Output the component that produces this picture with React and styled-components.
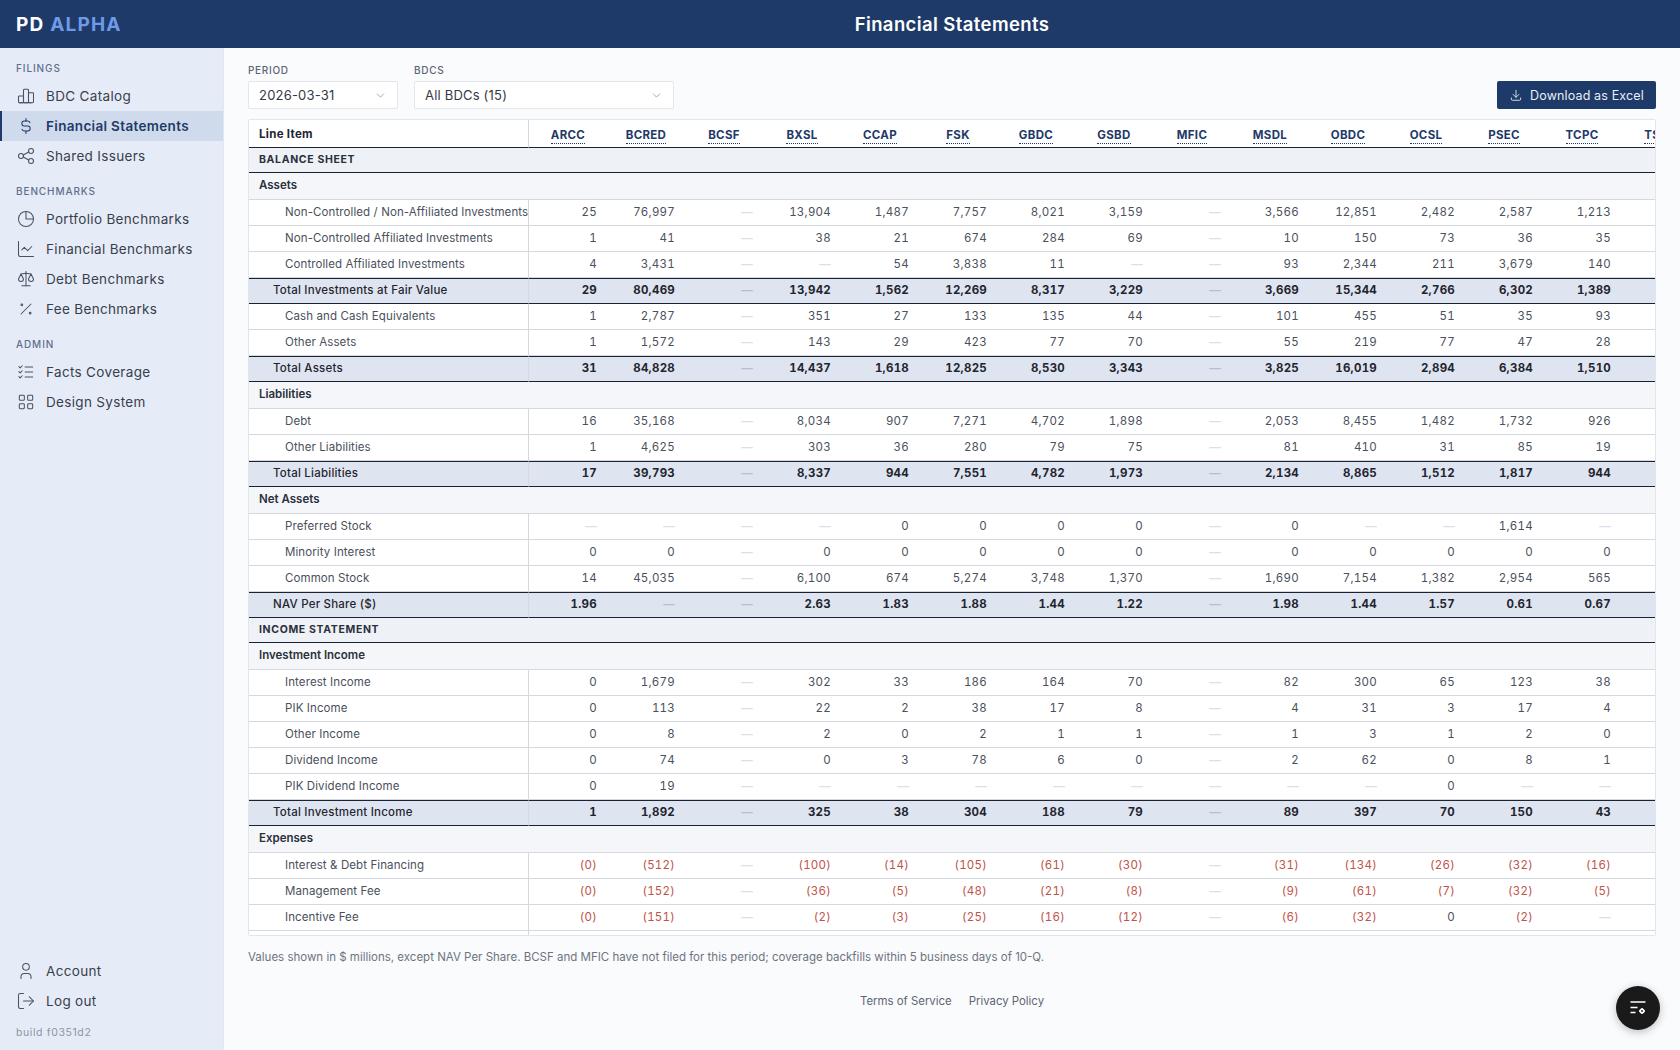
import styled, { createGlobalStyle } from 'styled-components'
import {
  TbChartBar, TbCurrencyDollar, TbShare, TbChartPie2, TbScale, TbPercentage,
  TbListCheck, TbLayoutGrid, TbUser, TbDownload, TbChevronDown,
} from 'react-icons/tb'
import { ChartLine, LogOut } from 'lucide-react'

const FONT = `'Inter', 'Open Sans', sans-serif`

const GlobalStyle = createGlobalStyle`
  html, body { margin: 0; height: 100%; }
  body { font-family: ${FONT}; background: #fafbfd; color: #343a46; }
  #root { height: 100%; }
  * { box-sizing: border-box; }
`

const Shell = styled.div`
  height: 100vh;
  display: flex;
  flex-direction: column;
  overflow: hidden;
`

const TopBar = styled.header`
  height: 48px;
  flex: none;
  display: flex;
  align-items: center;
  background: #1e3a68;
  color: #fff;
`

const Brand = styled.div`
  width: 224px;
  padding-left: 16px;
  font-size: 19px;
  font-weight: 700;
  letter-spacing: 1.2px;
  span { color: #6f9ae8; }
`

const PageTitle = styled.h1`
  flex: 1;
  margin: 0 0 1px;
  text-align: center;
  font-size: 18.5px;
  font-weight: 600;
  letter-spacing: 0.4px;
`

const Body = styled.div`
  flex: 1;
  min-height: 0;
  display: flex;
`

const Sidebar = styled.aside`
  width: 224px;
  flex: none;
  display: flex;
  flex-direction: column;
  background: #e6ecf7;
  border-right: 1px solid #e2e6ee;
  padding: 14px 0 11px;
`

const NavLabel = styled.div`
  padding-left: 16px;
  margin: 0 0 7px;
  font-size: 10px;
  font-weight: 500;
  letter-spacing: 0.9px;
  color: #5f6f8c;
`

const NavGroup = styled.nav`
  display: flex;
  flex-direction: column;
  margin-bottom: 14px;
`

const NavItem = styled.a`
  height: 30px;
  display: flex;
  align-items: center;
  gap: 10px;
  padding-left: 16px;
  font-size: 13.5px;
  font-weight: ${p => (p.$active ? 600 : 400)};
  letter-spacing: 0.33px;
  color: ${p => (p.$active ? '#1e3a68' : '#383f4c')};
  background: ${p => (p.$active ? '#cfdaec' : 'transparent')};
  box-shadow: ${p => (p.$active ? 'inset 2px 0 0 #1e3a68' : 'none')};
  svg { width: 20px; height: 20px; stroke-width: 1.25; color: ${p => (p.$active ? '#1e3a68' : '#4a5160')}; flex: none; }
`

const SidebarFoot = styled.div`
  margin-top: auto;
  display: flex;
  flex-direction: column;
`

const BuildTag = styled.div`
  padding: 10px 0 0 16px;
  font-size: 10.5px;
  letter-spacing: 0.6px;
  color: #8d95a3;
`

const Main = styled.main`
  flex: 1;
  min-width: 0;
  display: flex;
  flex-direction: column;
  padding: 16px 24px 0;
`

const Toolbar = styled.div`
  display: flex;
  align-items: flex-end;
  gap: 16px;
  margin-bottom: 10px;
`

const Field = styled.label`
  display: flex;
  flex-direction: column;
  gap: 5px;
`

const FieldLabel = styled.span`
  font-size: 10px;
  font-weight: 500;
  letter-spacing: 0.7px;
  color: #5d6574;
`

const Select = styled.div`
  width: ${p => p.$width}px;
  height: 28px;
  display: flex;
  align-items: center;
  justify-content: space-between;
  padding: 0 10px;
  background: #fff;
  border: 1px solid #e3e6ec;
  border-radius: 2px;
  font-size: 13px;
  letter-spacing: 0.2px;
  color: #343a46;
  svg { width: 13px; height: 13px; color: #8f96a3; stroke-width: 1.5; }
`

const DownloadButton = styled.button`
  margin-left: auto;
  height: 28px;
  width: 159px;
  display: flex;
  align-items: center;
  justify-content: center;
  gap: 7px;
  padding-bottom: 1px;
  border: 0;
  border-radius: 2px;
  background: #1e3a68;
  color: #e9eef7;
  font-family: ${FONT};
  font-size: 12.5px;
  letter-spacing: 0.14px;
  svg { width: 14px; height: 14px; stroke-width: 1.5; }
`

const TableWrap = styled.div`
  flex: none;
  height: 817px;
  overflow: auto;
  scrollbar-width: none;
  background: #fff;
  border: 1px solid #e2e5ec;
  border-radius: 2px;
`

const Table = styled.table`
  width: 1450px;
  table-layout: fixed;
  border-collapse: separate;
  border-spacing: 0;
  font-size: 11.5px;
`

const HeadCell = styled.th`
  height: 28px;
  padding: 3px 0 0;
  background: #fff;
  border-bottom: 1px solid #1a2233;
  position: sticky;
  top: 0;
  z-index: 1;
  text-align: center;
  font-size: 11.5px;
  font-weight: 700;
  letter-spacing: 0.3px;
  color: #1e3a68;
  span { border-bottom: 1px dotted #1e3a68; padding-bottom: 1px; }
`

const LineHead = styled(HeadCell)`
  padding: 0 0 0 10px;
  text-align: left;
  color: #1f2530;
  border-right: 1px solid #d5d8de;
`

const BandCell = styled.td`
  height: ${p => (p.$major ? 25 : 27)}px;
  padding: 0 0 2px 10px;
  background: ${p => (p.$major ? '#eef1f6' : '#f4f6f9')};
  border-bottom: 1px solid ${p => (p.$major ? '#1a2233' : '#d5d8de')};
  font-size: ${p => (p.$major ? '10.5px' : '11.5px')};
  font-weight: ${p => (p.$major ? 700 : 600)};
  letter-spacing: ${p => (p.$major ? '0.65px' : '0')};
  color: #2a303c;
`

const LineCell = styled.td`
  height: 26px;
  padding: 0 0 2px ${p => (p.$total ? 24 : 36)}px;
  white-space: nowrap;
  overflow: hidden;
  font-weight: ${p => (p.$total ? 500 : 400)};
  letter-spacing: ${p => (p.$total ? 0.22 : 0.1)}px;
  color: ${p => (p.$total ? '#1f2530' : '#4a505c')};
  background: ${p => (p.$total ? '#dfe5f0' : '#fff')};
  border-right: 1px solid #d5d8de;
  border-bottom: 1px solid ${p => (p.$total ? '#1a2233' : '#d5d8de')};
  border-top: ${p => (p.$total ? '1px solid #1a2233' : '0')};
`

const toneColor = p => {
  if (p.$tone === 'neg') return '#c0534a'
  if (p.$tone === 'nil') return p.$total ? '#b7bfcd' : '#dcdfe5'
  return p.$total ? '#1f2530' : '#4a505c'
}

const ValueCell = styled.td`
  height: 26px;
  padding: 0 10px 2px 0;
  text-align: right;
  white-space: nowrap;
  font-variant-numeric: tabular-nums;
  letter-spacing: 0.25px;
  font-weight: ${p => (p.$total || p.$tone === 'nil' ? 700 : 400)};
  color: ${toneColor};
  background: ${p => (p.$total ? '#dfe5f0' : '#fff')};
  border-bottom: 1px solid ${p => (p.$total ? '#1a2233' : '#d5d8de')};
  border-top: ${p => (p.$total ? '1px solid #1a2233' : '0')};
`

const Note = styled.p`
  margin: 14px 0 0;
  font-size: 11.5px;
  color: #6d7480;
`

const FootLinks = styled.div`
  margin-top: 30px;
  display: flex;
  justify-content: center;
  gap: 17px;
  font-size: 11.4px;
  color: #5d6574;
`

const Fab = styled.button`
  position: fixed;
  right: 20px;
  bottom: 20px;
  width: 44px;
  height: 44px;
  display: flex;
  align-items: center;
  justify-content: center;
  border: 0;
  border-radius: 50%;
  background: #1a1a1a;
  box-shadow: 0 2px 8px rgba(0, 0, 0, 0.25);
  color: #fff;
`

const COLUMNS = ['ARCC', 'BCRED', 'BCSF', 'BXSL', 'CCAP', 'FSK', 'GBDC', 'GSBD', 'MFIC', 'MSDL', 'OBDC', 'OCSL', 'PSEC', 'TCPC', 'TSLX']

const row = (label, values, total) => ({ label, values: values.split(' '), total })

const ROWS = [
  { band: 'BALANCE SHEET', major: true },
  { band: 'Assets' },
  row('Non-Controlled / Non-Affiliated Investments', '25 76,997 — 13,904 1,487 7,757 8,021 3,159 — 3,566 12,851 2,482 2,587 1,213 —'),
  row('Non-Controlled Affiliated Investments', '1 41 — 38 21 674 284 69 — 10 150 73 36 35 —'),
  row('Controlled Affiliated Investments', '4 3,431 — — 54 3,838 11 — — 93 2,344 211 3,679 140 —'),
  row('Total Investments at Fair Value', '29 80,469 — 13,942 1,562 12,269 8,317 3,229 — 3,669 15,344 2,766 6,302 1,389 —', true),
  row('Cash and Cash Equivalents', '1 2,787 — 351 27 133 135 44 — 101 455 51 35 93 —'),
  row('Other Assets', '1 1,572 — 143 29 423 77 70 — 55 219 77 47 28 —'),
  row('Total Assets', '31 84,828 — 14,437 1,618 12,825 8,530 3,343 — 3,825 16,019 2,894 6,384 1,510 —', true),
  { band: 'Liabilities' },
  row('Debt', '16 35,168 — 8,034 907 7,271 4,702 1,898 — 2,053 8,455 1,482 1,732 926 —'),
  row('Other Liabilities', '1 4,625 — 303 36 280 79 75 — 81 410 31 85 19 —'),
  row('Total Liabilities', '17 39,793 — 8,337 944 7,551 4,782 1,973 — 2,134 8,865 1,512 1,817 944 —', true),
  { band: 'Net Assets' },
  row('Preferred Stock', '— — — — 0 0 0 0 — 0 — — 1,614 — —'),
  row('Minority Interest', '0 0 — 0 0 0 0 0 — 0 0 0 0 0 —'),
  row('Common Stock', '14 45,035 — 6,100 674 5,274 3,748 1,370 — 1,690 7,154 1,382 2,954 565 —'),
  row('NAV Per Share ($)', '1.96 — — 2.63 1.83 1.88 1.44 1.22 — 1.98 1.44 1.57 0.61 0.67 —', true),
  { band: 'INCOME STATEMENT', major: true },
  { band: 'Investment Income' },
  row('Interest Income', '0 1,679 — 302 33 186 164 70 — 82 300 65 123 38 —'),
  row('PIK Income', '0 113 — 22 2 38 17 8 — 4 31 3 17 4 —'),
  row('Other Income', '0 8 — 2 0 2 1 1 — 1 3 1 2 0 —'),
  row('Dividend Income', '0 74 — 0 3 78 6 0 — 2 62 0 8 1 —'),
  row('PIK Dividend Income', '0 19 — — — — — — — — — 0 — — —'),
  row('Total Investment Income', '1 1,892 — 325 38 304 188 79 — 89 397 70 150 43 —', true),
  { band: 'Expenses' },
  row('Interest & Debt Financing', '(0) (512) — (100) (14) (105) (61) (30) — (31) (134) (26) (32) (16) —'),
  row('Management Fee', '(0) (152) — (36) (5) (48) (21) (8) — (9) (61) (7) (32) (5) —'),
  row('Incentive Fee', '(0) (151) — (2) (3) (25) (16) (12) — (6) (32) 0 (2) — —'),
  row('Other Expenses', '(0) (44) — (6) (2) (13) (4) (3) — (3) (9) (2) (5) (2) —'),
]

const toneOf = value => {
  if (value === '—') return 'nil'
  return value.startsWith('(') ? 'neg' : undefined
}

function FabIcon() {
  return (
    <svg width="18" height="18" viewBox="0 0 18 18" fill="none" stroke="currentColor" strokeWidth="1.3">
      <path d="M1.5 3h15M1.5 8.5h7M1.5 13.5h5" />
      <circle cx="13" cy="12" r="1.7" strokeWidth="1.6" />
      <path d="M13 9v1.2M13 13.8V15M10 12h1.2M14.8 12H16" strokeWidth="1.4" />
    </svg>
  )
}

function Nav({ icon: Icon, children, active }) {
  return (
    <NavItem $active={active}>
      <Icon />
      {children}
    </NavItem>
  )
}

export default function App() {
  return (
    <>
      <GlobalStyle />
      <Shell>
        <TopBar>
          <Brand>PD <span>ALPHA</span></Brand>
          <PageTitle>Financial Statements</PageTitle>
        </TopBar>
        <Body>
          <Sidebar>
            <NavLabel>FILINGS</NavLabel>
            <NavGroup>
              <Nav icon={TbChartBar}>BDC Catalog</Nav>
              <Nav icon={TbCurrencyDollar} active>Financial Statements</Nav>
              <Nav icon={TbShare}>Shared Issuers</Nav>
            </NavGroup>
            <NavLabel>BENCHMARKS</NavLabel>
            <NavGroup>
              <Nav icon={TbChartPie2}>Portfolio Benchmarks</Nav>
              <Nav icon={ChartLine}>Financial Benchmarks</Nav>
              <Nav icon={TbScale}>Debt Benchmarks</Nav>
              <Nav icon={TbPercentage}>Fee Benchmarks</Nav>
            </NavGroup>
            <NavLabel>ADMIN</NavLabel>
            <NavGroup>
              <Nav icon={TbListCheck}>Facts Coverage</Nav>
              <Nav icon={TbLayoutGrid}>Design System</Nav>
            </NavGroup>
            <SidebarFoot>
              <Nav icon={TbUser}>Account</Nav>
              <Nav icon={LogOut}>Log out</Nav>
              <BuildTag>build f0351d2</BuildTag>
            </SidebarFoot>
          </Sidebar>
          <Main>
            <Toolbar>
              <Field>
                <FieldLabel>PERIOD</FieldLabel>
                <Select $width={150}>2026-03-31<TbChevronDown /></Select>
              </Field>
              <Field>
                <FieldLabel>BDCS</FieldLabel>
                <Select $width={260}>All BDCs (15)<TbChevronDown /></Select>
              </Field>
              <DownloadButton><TbDownload />Download as Excel</DownloadButton>
            </Toolbar>
            <TableWrap>
              <Table>
                <colgroup>
                  <col style={{ width: 280 }} />
                  {COLUMNS.map(c => <col key={c} style={{ width: 78 }} />)}
                </colgroup>
                <thead>
                  <tr>
                    <LineHead>Line Item</LineHead>
                    {COLUMNS.map(c => <HeadCell key={c}><span>{c}</span></HeadCell>)}
                  </tr>
                </thead>
                <tbody>
                  {ROWS.map(r => (
                    r.band ? (
                      <tr key={r.band}>
                        <BandCell colSpan={16} $major={r.major}>{r.band}</BandCell>
                      </tr>
                    ) : (
                      <tr key={r.label}>
                        <LineCell $total={r.total}>{r.label}</LineCell>
                        {r.values.map((v, i) => (
                          <ValueCell key={i} $total={r.total} $tone={toneOf(v)}>{v}</ValueCell>
                        ))}
                      </tr>
                    )
                  ))}
                </tbody>
              </Table>
            </TableWrap>
            <Note>Values shown in $ millions, except NAV Per Share. BCSF and MFIC have not filed for this period; coverage backfills within 5 business days of 10-Q.</Note>
            <FootLinks>
              <span>Terms of Service</span>
              <span>Privacy Policy</span>
            </FootLinks>
          </Main>
        </Body>
      </Shell>
      <Fab><FabIcon /></Fab>
    </>
  )
}
